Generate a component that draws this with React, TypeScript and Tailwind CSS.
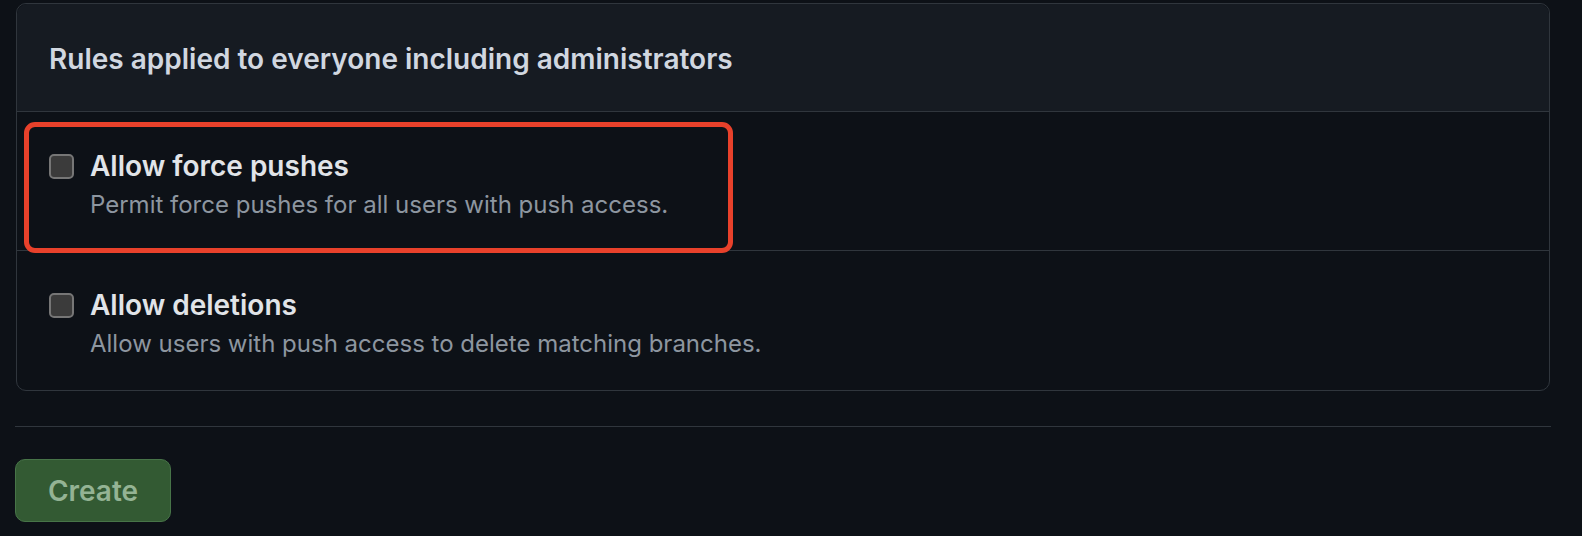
import React from "react";

const font = { fontFamily: "Inter, 'Noto Sans', sans-serif" };

function Row({ title, desc, last }: { title: string; desc: string; last?: boolean }) {
  return (
    <div className={`flex flex-col pl-[32px] pt-[38px] ${last ? "pb-[32px]" : "pb-[31px] border-b border-[#30363d]"}`}>
      <div className="flex items-center h-[32px]">
        <div className="w-[25px] h-[25px] rounded-[5px] border-2 border-[#767676] bg-[#3b3b3b] shrink-0" />
        <span className="ml-[16px] text-[28px] leading-[32px] font-semibold text-[#e1e4e8]">{title}</span>
      </div>
      <div className="mt-[9px] pl-[41px] text-[24px] leading-[28px] text-[#8d96a0]">{desc}</div>
    </div>
  );
}

export default function App() {
  return (
    <div className="w-[1582px] h-[536px] bg-[#0d1117] pt-[3px] overflow-hidden" style={font}>
      <div className="relative ml-[16px] w-[1534px] border border-[#30363d] rounded-[10px] overflow-visible">
        <div className="bg-[#161b22] rounded-t-[10px] border-b border-[#30363d] pl-[32px] pt-[39px] pb-[36px]">
          <div className="text-[28px] leading-[32px] font-semibold text-[#d1d7e0]">
            Rules applied to everyone including administrators
          </div>
        </div>
        <Row title="Allow force pushes" desc="Permit force pushes for all users with push access." />
        <Row title="Allow deletions" desc="Allow users with push access to delete matching branches." last />
        <div className="absolute left-[7px] top-[118px] w-[709px] h-[131px] border-[5px] border-[#e8412b] rounded-[11px] pointer-events-none" />
      </div>
      <div className="ml-[15px] w-[1536px] mt-[35px] h-px bg-[#30363d]" />
      <div className="ml-[15px] mt-[32px]">
        <button className="w-[156px] h-[63px] rounded-[10px] bg-[#335a33] border border-[#477448] text-[#94b394] text-[28px] font-semibold">
          Create
        </button>
      </div>
    </div>
  );
}
